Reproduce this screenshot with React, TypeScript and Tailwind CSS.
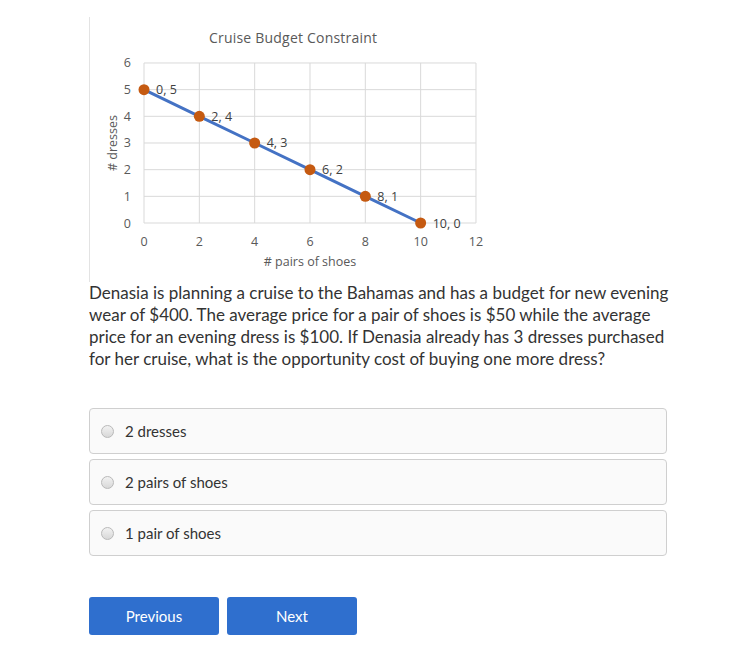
import React from 'react';

const points = [
  [0, 5],
  [2, 4],
  [4, 3],
  [6, 2],
  [8, 1],
  [10, 0],
];

const px = (v: number) => 54 + (v / 2) * 55.33;
const py = (v: number) => 206 - v * 26.67;

const Chart: React.FC = () => {
  return (
    <svg width="400" height="265" viewBox="0 0 400 265" className="block">
      <text x="203" y="26" textAnchor="middle" fontSize="14" fill="#595959" fontFamily="'Open Sans', sans-serif" textLength="168">
        Cruise Budget Constraint
      </text>
      {/* grid */}
      {[0, 1, 2, 3, 4, 5, 6].map((v) => (
        <line key={'h' + v} x1={px(0)} x2={px(12)} y1={py(v)} y2={py(v)} stroke="#d9d9d9" strokeWidth="1" />
      ))}
      {[0, 2, 4, 6, 8, 10, 12].map((v) => (
        <line key={'v' + v} x1={px(v)} x2={px(v)} y1={py(0)} y2={py(6)} stroke="#d9d9d9" strokeWidth="1" />
      ))}
      {/* y labels */}
      {[0, 1, 2, 3, 4, 5, 6].map((v) => (
        <text key={'yl' + v} x="41" y={py(v) + 4.5} textAnchor="end" fontSize="12.5" fill="#595959" fontFamily="'Open Sans', sans-serif">
          {v}
        </text>
      ))}
      {[0, 2, 4, 6, 8, 10, 12].map((v) => (
        <text key={'xl' + v} x={px(v)} y="228.5" textAnchor="middle" fontSize="12.5" fill="#595959" fontFamily="'Open Sans', sans-serif">
          {v}
        </text>
      ))}
      <text x="220" y="249" textAnchor="middle" fontSize="12.5" fill="#595959" fontFamily="'Open Sans', sans-serif">
        # pairs of shoes
      </text>
      <text x="0" y="0" textAnchor="middle" fontSize="12.5" fill="#595959" fontFamily="'Open Sans', sans-serif" transform="translate(27 126) rotate(-90)">
        # dresses
      </text>
      <polyline
        points={points.map(([x, y]) => `${px(x)},${py(y)}`).join(' ')}
        fill="none"
        stroke="#4472c4"
        strokeWidth="3"
      />
      {points.map(([x, y]) => (
        <g key={'p' + x}>
          <circle cx={px(x)} cy={py(y)} r="5.5" fill="#c55a11" />
          <text x={px(x) + 12} y={py(y) + 4.5} fontSize="12.5" fill="#404040" fontFamily="'Open Sans', sans-serif">
            {x}, {y}
          </text>
        </g>
      ))}
    </svg>
  );
};

const options = ['2 dresses', '2 pairs of shoes', '1 pair of shoes'];

const App: React.FC = () => {
  return (
    <div className="min-h-screen bg-white pl-[89px] pt-[17px] font-['Lato',sans-serif] text-[#333]">
      {/* chart image */}
      <div className="border-l border-[#e3e3e3] w-[401px]">
        <Chart />
      </div>

      <p className="w-[582px] text-[17px] leading-[22px] text-[#333]">
        Denasia is planning a cruise to the Bahamas and has a budget for new evening wear of $400. The average price for a
        pair of shoes is $50 while the average price for an evening dress is $100. If Denasia already has 3 dresses
        purchased for her cruise, what is the opportunity cost of buying one more dress?
      </p>

      <div className="mt-[38px] flex w-[578px] flex-col gap-[5px]">
        {options.map((o) => (
          <label
            key={o}
            className="flex h-[46px] items-center gap-[11px] rounded-[4px] border border-[#cfcfcf] bg-[#fafafa] pl-[11px] text-[15px]"
          >
            <span className="h-[13px] w-[13px] rounded-full border border-[#b9b9b9] bg-gradient-to-b from-[#f2f2f2] to-[#d8d8d8]" />
            <span>{o}</span>
          </label>
        ))}
      </div>

      <div className="mt-[41px] flex gap-[8px]">
        <button className="h-[38px] w-[130px] rounded-[3px] bg-[#2f6fce] text-[15px] text-white">Previous</button>
        <button className="h-[38px] w-[130px] rounded-[3px] bg-[#2f6fce] text-[15px] text-white">Next</button>
      </div>
    </div>
  );
};

export default App;
